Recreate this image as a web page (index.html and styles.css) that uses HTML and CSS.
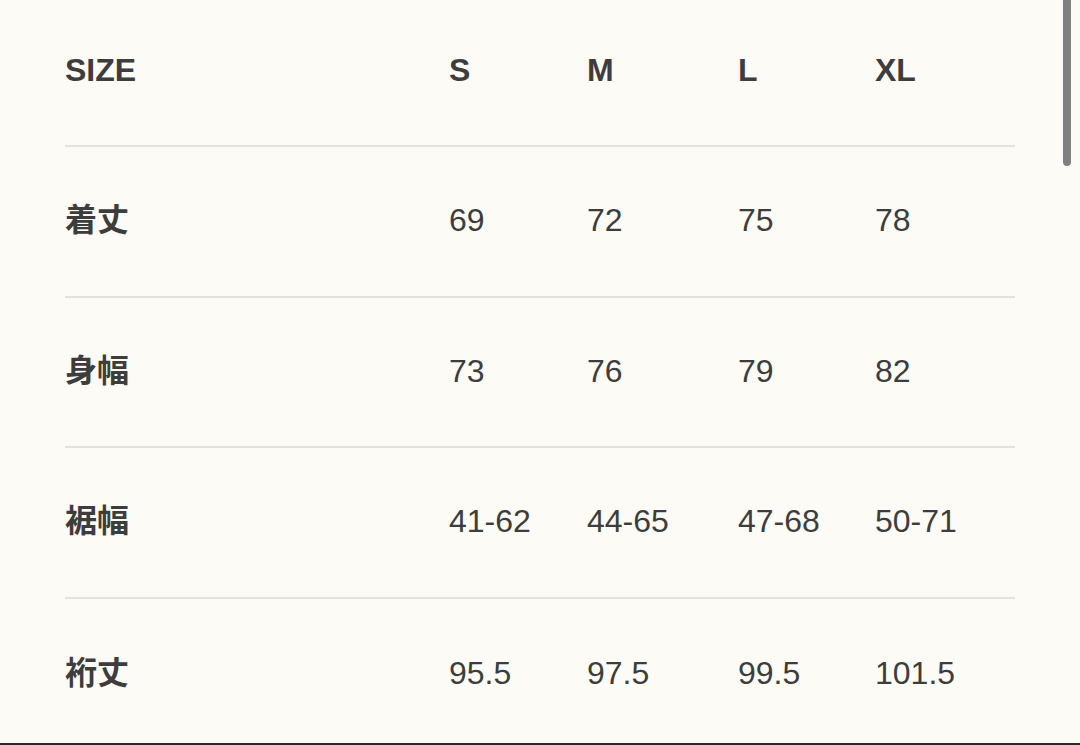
FILE: index.html
```html
<!DOCTYPE html>
<html lang="ja">
<head>
<meta charset="utf-8">
<title>Size chart</title>
<link rel="stylesheet" href="styles.css">
</head>
<body>
<div class="page">
  <div class="table">
    <div class="row head">
      <div class="cell label">SIZE</div>
      <div class="cell">S</div>
      <div class="cell">M</div>
      <div class="cell">L</div>
      <div class="cell">XL</div>
    </div>
    <div class="row">
      <div class="cell label">着丈</div>
      <div class="cell">69</div>
      <div class="cell">72</div>
      <div class="cell">75</div>
      <div class="cell">78</div>
    </div>
    <div class="row">
      <div class="cell label">身幅</div>
      <div class="cell">73</div>
      <div class="cell">76</div>
      <div class="cell">79</div>
      <div class="cell">82</div>
    </div>
    <div class="row">
      <div class="cell label">裾幅</div>
      <div class="cell">41-62</div>
      <div class="cell">44-65</div>
      <div class="cell">47-68</div>
      <div class="cell">50-71</div>
    </div>
    <div class="row last">
      <div class="cell label">裄丈</div>
      <div class="cell">95.5</div>
      <div class="cell">97.5</div>
      <div class="cell">99.5</div>
      <div class="cell">101.5</div>
    </div>
  </div>
</div>
<div class="scrollbar"></div>
<div class="bottom-edge"></div>
</body>
</html>
```
FILE: styles.css
```css
html, body {
  margin: 0;
  padding: 0;
  background: #fcfbf6;
}
body {
  width: 1080px;
  height: 745px;
  overflow: hidden;
  font-family: "Liberation Sans", "Noto Sans CJK JP", sans-serif;
  color: #3d3d3d;
}
.page {
  padding: 0 65px;
}
.table {
  width: 950px;
}
.row {
  display: grid;
  grid-template-columns: 384px 138px 151px 137px 1fr;
  align-items: center;
  height: 150.6px;
  border-bottom: 2px solid #e3e2dd;
  font-size: 32px;
  line-height: 36px;
  padding-bottom: 2px;
  box-sizing: border-box;
}
.row.head {
  height: 147px;
  padding-bottom: 6px;
  font-weight: bold;
}
.row.last {
  border-bottom: none;
}
.cell {
  white-space: nowrap;
}
.label {
  font-weight: bold;
}
.scrollbar {
  position: absolute;
  top: 0;
  left: 1063px;
  width: 8px;
  height: 166px;
  background: #808080;
  border-radius: 0 0 4px 4px;
}
.bottom-edge {
  position: absolute;
  left: 0;
  bottom: 0;
  width: 1080px;
  height: 2px;
  background: #2a2a2a;
}
```
